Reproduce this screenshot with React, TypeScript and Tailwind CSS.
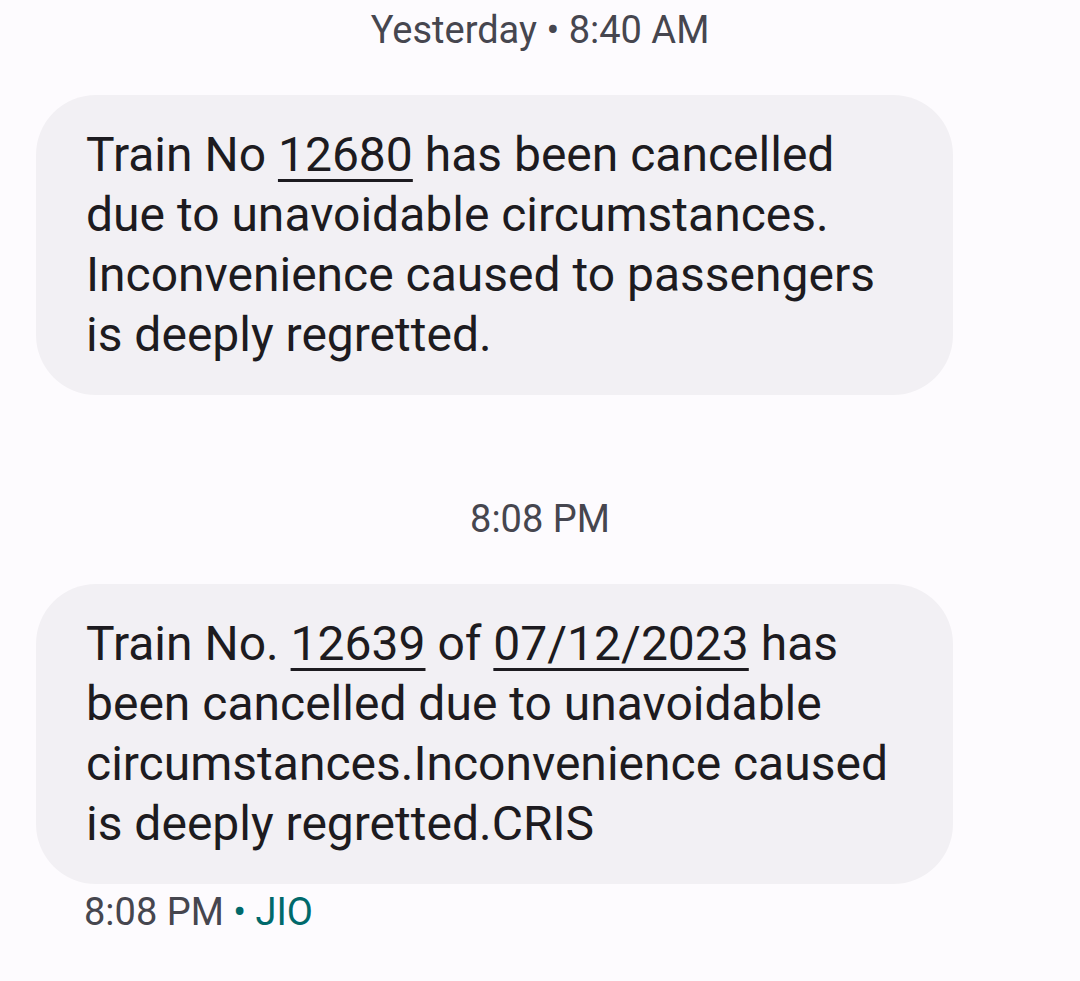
export default function App() {
  const font = { fontFamily: "Roboto, 'Noto Sans', sans-serif" };
  return (
    <div className="w-[1080px] h-[981px] bg-[#fdfbfe] overflow-hidden" style={font}>
      <div className="pt-[8px] text-center text-[38px] leading-[44px] text-[#46464f]">
        Yesterday • 8:40 AM
      </div>
      <div className="ml-[36px] mt-[43px] w-[917px] rounded-[60px] bg-[#f2f0f4] pl-[50px] pr-[40px] pt-[30px] pb-[30px] text-[48px] leading-[60px] text-[#1d1b20]">
        Train No <span className="underline decoration-[3px] underline-offset-[8px]">12680</span> has been cancelled due to unavoidable circumstances. Inconvenience caused to passengers is deeply regretted.
      </div>
      <div className="mt-[102px] text-center text-[38px] leading-[44px] text-[#46464f]">8:08 PM</div>
      <div className="ml-[36px] mt-[43px] w-[917px] rounded-[60px] bg-[#f2f0f4] pl-[50px] pr-[40px] pt-[30px] pb-[30px] text-[48px] leading-[60px] text-[#1d1b20]">
        Train No. <span className="underline decoration-[3px] underline-offset-[8px]">12639</span> of <span className="underline decoration-[3px] underline-offset-[8px]">07/12/2023</span> has been cancelled due to unavoidable circumstances.Inconvenience caused is deeply regretted.CRIS
      </div>
      <div className="ml-[84px] mt-[6px] text-[38px] leading-[44px] text-[#46464f]">
        8:08 PM <span className="text-[#00696b]">• JIO</span>
      </div>
    </div>
  );
}
